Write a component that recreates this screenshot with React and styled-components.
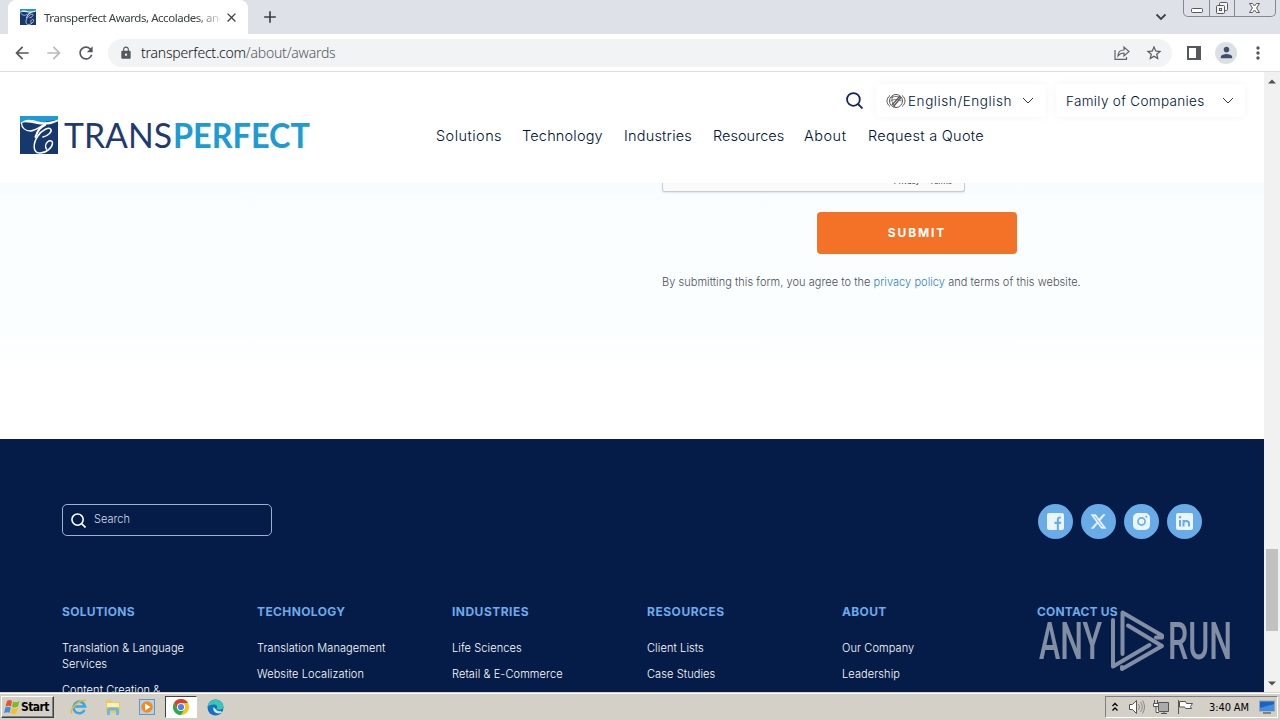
import React from 'react';
import styled, { createGlobalStyle } from 'styled-components';
import {
  MdArrowBack,
  MdArrowForward,
  MdRefresh,
  MdLock,
  MdStarBorder,
  MdMoreVert,
  MdClose,
  MdAdd,
  MdPerson,
} from 'react-icons/md';
import { FaXTwitter } from 'react-icons/fa6';

const GlobalStyle = createGlobalStyle`
  * {
    box-sizing: border-box;
  }
  body {
    margin: 0;
    overflow: hidden;
    font-family: Inter, 'Liberation Sans', sans-serif;
  }
`;

const Desktop = styled.div`
  width: 1280px;
  height: 720px;
  display: flex;
  flex-direction: column;
  background: #fff;
`;

/* ---------- browser chrome ---------- */

const TabStrip = styled.div`
  display: flex;
  align-items: flex-start;
  height: 34px;
  flex: none;
  padding-left: 8px;
  background: #dee1e8;
`;

const Tab = styled.div`
  display: flex;
  align-items: center;
  width: 240px;
  height: 34px;
  padding: 0 9px 0 12px;
  background: #fff;
  border-radius: 8px 8px 0 0;
  color: #3c4043;
  svg {
    flex: none;
  }
`;

const TabTitle = styled.span`
  width: 176px;
  flex: none;
  margin: 0 4px 0 8px;
  overflow: hidden;
  white-space: nowrap;
  font: 11.5px 'Noto Sans', sans-serif;
  letter-spacing: -0.46px;
  mask-image: linear-gradient(to right, #000 152px, transparent 180px);
`;

const NewTab = styled.div`
  display: flex;
  margin: 7px 0 0 12px;
  color: #3c4043;
`;

const StripEnd = styled.div`
  display: flex;
  margin-left: auto;
`;

const TabSearch = styled.svg`
  margin: 13px 16px 0 0;
`;

const WindowButtons = styled.div`
  display: flex;
  width: 93px;
  height: 17px;
  margin-right: 4px;
  border: 1px solid #85898f;
  border-top: 0;
  border-radius: 0 0 5px 5px;
`;

const WindowButton = styled.div`
  display: flex;
  justify-content: center;
  width: ${(p) => p.$width}px;
  border-right: ${(p) => (p.$last ? '0' : '1px solid #85898f')};
`;

const Toolbar = styled.div`
  display: flex;
  align-items: center;
  height: 38px;
  flex: none;
  padding-left: 12px;
  border-bottom: 1px solid #dcdee1;
  color: #55585c;
  > * {
    flex: none;
  }
`;

const NavIcon = styled.div`
  display: flex;
  width: 32px;
  color: ${(p) => (p.$off ? '#b9bbbe' : '#55585c')};
`;

const AddressBar = styled.div`
  display: flex;
  align-items: center;
  width: 1064px;
  height: 28px;
  padding: 0 9px 0 11px;
  border-radius: 14px;
  background: #f1f3f5;
`;

const Url = styled.span`
  flex: 1;
  margin-left: 8px;
  font: 300 14px 'Noto Sans', sans-serif;
  letter-spacing: -0.22px;
  color: #111317;
  span {
    color: #55595d;
  }
`;

const ShareIcon = styled.svg`
  margin-right: 15px;
`;

const Avatar = styled.div`
  display: flex;
  align-items: center;
  justify-content: center;
  width: 22px;
  height: 22px;
  margin: 0 11px 0 -1px;
  border-radius: 50%;
  background: #dcdfe4;
  color: #44506b;
`;

/* ---------- site ---------- */

const Viewport = styled.div`
  display: flex;
  height: 620px;
  flex: none;
`;

const Page = styled.div`
  display: flex;
  flex-direction: column;
  width: 1264px;
  height: 620px;
  overflow: hidden;
`;

const Header = styled.header`
  display: flex;
  height: 111px;
  flex: none;
  padding-left: 20px;
  background: #fff;
  color: #000f33;
  font-weight: 350;
`;

const Logo = styled.svg`
  width: 296px;
  height: 44px;
  margin-top: 41px;
`;

const HeaderMain = styled.div`
  display: flex;
  flex-direction: column;
  width: 828px;
  margin-left: 120px;
`;

const Controls = styled.div`
  display: flex;
  align-items: center;
  justify-content: flex-end;
  height: 33px;
  margin-top: 12px;
  padding-right: 19px;
`;

const Select = styled.div`
  display: flex;
  align-items: center;
  width: ${(p) => p.$width}px;
  height: 33px;
  margin-left: ${(p) => p.$gap}px;
  padding: 0 ${(p) => p.$pad}px 0 10px;
  border-radius: 4px;
  background: #fff;
  box-shadow: 0 0 10px rgba(0, 0, 0, 0.045);
  font-size: 13.5px;
  letter-spacing: ${(p) => p.$spacing}px;
  white-space: nowrap;
  svg:last-child {
    margin-left: auto;
  }
`;

const SiteNav = styled.nav`
  display: grid;
  grid-template-columns: 86px 102px 89px 91px 64px auto;
  margin-top: 10px;
  font-size: 14.5px;
  line-height: 18px;
  white-space: nowrap;
`;

const NavLink = styled.a`
  letter-spacing: ${(p) => p.$spacing}px;
`;

const FormArea = styled.section`
  display: flex;
  flex-direction: column;
  align-items: flex-start;
  height: 256px;
  flex: none;
  padding-left: 662px;
  background: linear-gradient(#f8fcff 0, #fafeff 40px, #fbfeff 150px, #fff 195px);
`;

const Captcha = styled.div`
  display: flex;
  align-items: flex-end;
  justify-content: flex-end;
  gap: 10px;
  width: 303px;
  height: 9px;
  padding: 0 12px 4px 0;
  overflow: hidden;
  border: 1px solid #c9cccf;
  border-top: 0;
  border-radius: 0 0 3px 3px;
  box-shadow: 0 1px 2px rgba(0, 0, 0, 0.1);
  background: #fafafa;
  font: 8px/10px Roboto, sans-serif;
  color: #333;
`;

const Submit = styled.button`
  width: 200px;
  height: 42px;
  margin: 20px 0 0 155px;
  padding: 0 0 2px;
  border: 0;
  border-radius: 4px;
  background: #f47227;
  color: #fff;
  font: 700 12px Inter, sans-serif;
  letter-spacing: 1.9px;
`;

const Notice = styled.p`
  margin: 21px 0 0;
  font-size: 11px;
  font-weight: 300;
  line-height: 15px;
  letter-spacing: 0.045px;
  white-space: nowrap;
  color: #4c5056;
  a {
    color: #2f7fd2;
  }
`;

const Footer = styled.footer`
  display: flex;
  flex-direction: column;
  height: 253px;
  flex: none;
  padding: 65px 62px 0;
  background: #051c48;
  color: #fff;
`;

const FooterTop = styled.div`
  display: flex;
  justify-content: space-between;
  height: 35px;
`;

const SearchBox = styled.div`
  display: flex;
  align-items: center;
  gap: 8px;
  width: 210px;
  height: 32px;
  padding-left: 8px;
  border: 1px solid #9fb0cf;
  border-radius: 5px;
  font-size: 11px;
  font-weight: 300;
  color: #d3dbea;
  span {
    margin-top: -2px;
  }
`;

const Socials = styled.div`
  display: flex;
  gap: 8px;
`;

const Social = styled.a`
  display: flex;
  align-items: center;
  justify-content: center;
  width: 35px;
  height: 35px;
  border-radius: 50%;
  background: #69abe6;
  color: #e9f5ff;
`;

const Columns = styled.div`
  display: grid;
  grid-template-columns: repeat(6, 195px);
  margin-top: 64px;
`;

const Column = styled.div`
  display: flex;
  flex-direction: column;
  align-items: flex-start;
`;

const ColumnTitle = styled.h4`
  margin: 0 0 20px;
  font-size: 12px;
  font-weight: 650;
  line-height: 17px;
  letter-spacing: ${(p) => p.$spacing}px;
  color: #6cabe8;
`;

const ColumnLink = styled.a`
  margin-bottom: 10px;
  font-size: 11px;
  font-weight: 350;
  line-height: 16px;
  letter-spacing: 0.1px;
  white-space: pre-line;
`;

const Scrollbar = styled.div`
  display: flex;
  flex-direction: column;
  align-items: center;
  width: 16px;
  height: 620px;
  padding: 7px 0 6px;
  background: #f1f1f1;
`;

const Thumb = styled.div`
  width: 12px;
  height: 82px;
  margin: auto 0 50px;
  background: #c1c1c1;
`;

const Watermark = styled.svg`
  position: absolute;
  left: 1036px;
  top: 606px;
  opacity: 0.5;
`;

/* ---------- taskbar ---------- */

const Taskbar = styled.div`
  display: flex;
  align-items: center;
  height: 28px;
  flex: none;
  padding: 1px 2px 0 1px;
  border-top: 1px solid #d6d2ca;
  box-shadow: inset 0 1px #fff;
  background: #d4d0c8;
`;

const Start = styled.div`
  display: flex;
  align-items: center;
  gap: 0;
  width: 53px;
  height: 22px;
  padding-left: 2px;
  border: 1px solid;
  border-color: #fff #404040 #404040 #fff;
  box-shadow: inset -1px -1px #808080;
  font: 700 12px 'DejaVu Sans Condensed', 'DejaVu Sans', sans-serif;
  font-stretch: condensed;
  letter-spacing: -0.6px;
  color: #000;
`;

const Launchers = styled.div`
  display: flex;
  align-items: center;
  margin-left: 8px;
`;

const Launcher = styled.div`
  display: flex;
  align-items: center;
  justify-content: center;
  width: 34px;
  height: 22px;
  ${(p) =>
    p.$active &&
    `
    width: 32px;
    margin: 0 1px;
    background: #fff;
    border: 1px solid;
    border-color: #404040 #fff #fff #404040;
  `}
`;

const Tray = styled.div`
  display: flex;
  align-items: center;
  width: 173px;
  height: 22px;
  margin-left: auto;
  padding-left: 6px;
  border: 1px solid;
  border-color: #808080 #fff #fff #808080;
  font: 11px 'DejaVu Sans Condensed', 'DejaVu Sans', sans-serif;
  font-stretch: condensed;
  color: #000;
  span {
    width: 51px;
    padding-left: 1px;
    letter-spacing: -0.1px;
    white-space: nowrap;
  }
`;

const Brand = () => (
  <>
    <rect width="38" height="38" fill="#17386f" />
    <path d="M0 0h38v5C30 3 24 8 14 6 7 5 3 6 0 8z" fill="#1c9bd7" />
    <path d="M1 7C6 2 12 4 18 5.500S31 6 38 3.500v1.800C31 9 24 9.500 17 8 10 6.500 5 5.500 1 7z" fill="#fff" />
    <g fill="none" stroke="#fff" strokeLinecap="round">
      <path d="M1.500 7c0 5 4 8 9 8 6-.2 9-5 15-6.300" strokeWidth="1.300" />
      <path d="M25 9c-5 2-8 7-9.500 12" strokeWidth="2" />
      <path
        d="M23 21c5-1 9-5 8-7.500-1.500-3-9 0-13.500 7-4.500 7-5 16 2 16.500 7 .4 13-6 13-10 0-2.500-3-3-5-1s-2.500 5-1 7"
        strokeWidth="1.500"
      />
    </g>
  </>
);

const Chevron = () => (
  <svg width="12" height="7" viewBox="0 0 12 7" fill="none" stroke="#26344f">
    <path d="M1 1l5 5 5-5" />
  </svg>
);

const Magnifier = ({ size, color }) => (
  <svg width={size} height={size} viewBox="0 0 16 16" fill="none" stroke={color} strokeWidth="1.7">
    <circle cx="7" cy="7" r="6" />
    <path d="M11.3 11.3l4.2 4.2" />
  </svg>
);

const nav = [
  ['Solutions', 0.45],
  ['Technology', 0.18],
  ['Industries', 0.2],
  ['Resources', 0.03],
  ['About', 0.5],
  ['Request a Quote', 0.28],
];

const columns = [
  ['Solutions', 0.28, ['Translation & Language\nServices', 'Content Creation &']],
  ['Technology', 0.38, ['Translation Management', 'Website Localization']],
  ['Industries', 0.48, ['Life Sciences', 'Retail & E-Commerce']],
  ['Resources', 0.53, ['Client Lists', 'Case Studies']],
  ['About', 0.35, ['Our Company', 'Leadership']],
  ['Contact Us', 0.18, []],
];

function BrowserChrome() {
  return (
    <>
      <TabStrip>
        <Tab>
          <svg width="16" height="16" viewBox="0 0 38 38">
            <Brand />
          </svg>
          <TabTitle>Transperfect Awards, Accolades, and</TabTitle>
          <MdClose size={15} />
        </Tab>
        <NewTab>
          <MdAdd size={20} />
        </NewTab>
        <StripEnd>
          <TabSearch width="12" height="8" viewBox="0 0 12 8" fill="none" stroke="#3c4043" strokeWidth="1.8">
            <path d="M1.500 1.500L6 6l4.500-4.500" />
          </TabSearch>
          <WindowButtons>
            <WindowButton $width={26}>
              <svg width="14" height="16" fill="#fff" stroke="#55585d">
                <rect x="1.500" y="8.500" width="11" height="4" rx="1" />
              </svg>
            </WindowButton>
            <WindowButton $width={25}>
              <svg width="14" height="16" fill="#f3f4f6" stroke="#55585d">
                <rect x="4.500" y="2.500" width="8" height="8" rx="1" />
                <rect x="1.500" y="5.500" width="8" height="8" rx="1" />
                <rect x="4.500" y="8.500" width="2" height="2" />
              </svg>
            </WindowButton>
            <WindowButton $width={40} $last>
              <svg width="14" height="16" fill="#fff" stroke="#55585d">
                <path d="M1.500 3.500h3l2 2.500 2-2.500h3l-3 4.500 3 4.500h-3l-2-2.500-2 2.500h-3l3-4.500z" />
              </svg>
            </WindowButton>
          </WindowButtons>
        </StripEnd>
      </TabStrip>
      <Toolbar>
        <NavIcon><MdArrowBack size={20} /></NavIcon>
        <NavIcon $off><MdArrowForward size={20} /></NavIcon>
        <NavIcon><MdRefresh size={20} /></NavIcon>
        <AddressBar>
          <MdLock size={14} />
          <Url>transperfect.com<span>/about/awards</span></Url>
          <ShareIcon width="16" height="16" viewBox="0 0 16 16" fill="none" stroke="#606468" strokeWidth="1.200">
            <path d="M1 5v9.400h11.500V12" />
            <path d="M4 11c0-4 2.500-6 6-6V2l5 4.500-5 4.500V8c-3 0-4.500.8-6 3z" />
          </ShareIcon>
          <MdStarBorder size={18} />
        </AddressBar>
        <svg width="44" height="14" viewBox="0 0 44 14">
          <path d="M16 1h12v12H16z" fill="none" stroke="#55585c" strokeWidth="2" />
          <path d="M24 1h5v12h-5z" fill="#55585c" />
        </svg>
        <Avatar><MdPerson size={17} /></Avatar>
        <MdMoreVert size={20} />
      </Toolbar>
    </>
  );
}

function SiteHeader() {
  return (
    <Header>
      <Logo viewBox="0 0 296 44">
        <g transform="translate(0 3)">
          <Brand />
        </g>
        <g fontFamily="Lato, sans-serif" fontSize="34">
          <text x="44" y="35" fill="#1f3a70" fontWeight="400" textLength="108" lengthAdjust="spacingAndGlyphs">TRANS</text>
          <text x="153" y="35" fill="#1c9bd7" fontWeight="700" textLength="137" lengthAdjust="spacingAndGlyphs">PERFECT</text>
        </g>
      </Logo>
      <HeaderMain>
        <Controls>
          <Magnifier size={17} color="#14284f" />
          <Select $width={170} $gap={13} $pad={12} $spacing={0.58}>
            <svg width="22" height="16" viewBox="0 0 22 16" fill="none" stroke="#555">
              <circle cx="10" cy="8" r="6.500" />
              <path d="M4 2.500c-4 3-4 8 0 11M16 2.500c4 3 4 8 0 11" />
              <path d="M5 5c3-2 7-2 10 0M4.500 8c3-2 7-2 11 0M7 3c-2 4-1 7 2 11" strokeWidth=".8" />
              <path d="M14 3L6 12M15 4.500L7.500 13.500" strokeWidth="1.200" />
            </svg>
            <span>English/English</span>
            <Chevron />
          </Select>
          <Select $width={189} $gap={10} $pad={11} $spacing={0.34}>
            <span>Family of Companies</span>
            <Chevron />
          </Select>
        </Controls>
        <SiteNav>
          {nav.map(([label, spacing]) => (
            <NavLink key={label} $spacing={spacing}>{label}</NavLink>
          ))}
        </SiteNav>
      </HeaderMain>
    </Header>
  );
}

function SiteFooter() {
  return (
    <Footer>
      <FooterTop>
        <SearchBox>
          <Magnifier size={15} color="#fff" />
          <span>Search</span>
        </SearchBox>
        <Socials>
          <Social>
            <svg width="17" height="17" viewBox="0 0 17 17">
              <rect width="17" height="17" rx="2" fill="#e9f5ff" />
              <path d="M9.800 17v-6H7.500V8.700h2.300V7c0-2.600 1.500-3.700 4-3.400v2c-1.400-.1-1.900.2-1.900 1.500v1.600h2.200L13.800 11h-1.900v6z" fill="#69abe6" />
            </svg>
          </Social>
          <Social><FaXTwitter size={17} stroke="#e9f5ff" strokeWidth="14" /></Social>
          <Social>
            <svg width="17" height="17" viewBox="0 0 17 17">
              <rect width="17" height="17" rx="5" fill="#e9f5ff" />
              <circle cx="8.500" cy="8.500" r="3.600" fill="none" stroke="#69abe6" strokeWidth="1.600" />
              <circle cx="13.300" cy="3.800" r="1" fill="#69abe6" />
            </svg>
          </Social>
          <Social>
            <svg width="17" height="17" viewBox="0 0 17 17">
              <rect width="17" height="17" rx="2" fill="#e9f5ff" />
              <path d="M4 7v6.500M7.500 13.500V7M7.500 10c0-2.500 5.500-3 5.500.5v3" fill="none" stroke="#69abe6" strokeWidth="2" />
              <circle cx="4" cy="4.200" r="1.200" fill="#69abe6" />
            </svg>
          </Social>
        </Socials>
      </FooterTop>
      <Columns>
        {columns.map(([title, spacing, links]) => (
          <Column key={title}>
            <ColumnTitle $spacing={spacing}>{title.toUpperCase()}</ColumnTitle>
            {links.map((link) => (
              <ColumnLink key={link}>{link}</ColumnLink>
            ))}
          </Column>
        ))}
      </Columns>
    </Footer>
  );
}

function WindowsBar() {
  return (
    <Taskbar>
      <Start>
        <svg width="17" height="16" viewBox="0 0 17 16">
          <path d="M3 2c2-1.500 3.500-1 5 0L7 7.500C5.500 6.500 4 6.500 1.500 7.500z" fill="#e8552b" />
          <path d="M9 2.500c2 1 4 1 6.500-.5l-1.500 5.500c-2 1.200-4.200 1.200-6 .3z" fill="#7db928" />
          <path d="M1.300 8.500c2-1 3.800-1 5.500 0L5.500 14c-1.500-1-3-1-5.500 0z" fill="#3f8fe0" />
          <path d="M8 9c2 1 3.800 1 5.900-.2L12.500 14c-2 1.300-4 1.300-5.800.3z" fill="#fbbf1b" />
        </svg>
        Start
      </Start>
      <Launchers>
        <Launcher>
          <svg width="18" height="18" viewBox="0 0 18 18" fill="none">
            <path d="M14.500 12A5.800 5.800 0 1 1 15 8.500H5" stroke="#3ba7e5" strokeWidth="2.600" />
            <path d="M2 15.500C-1 12 9 1 16 2.500" stroke="#eab730" strokeWidth="1.500" />
          </svg>
        </Launcher>
        <Launcher>
          <svg width="18" height="18" viewBox="0 0 18 18">
            <path d="M2 2h5l1 2h8v11H2z" fill="#e9c962" />
            <path d="M3 5h12v4H3z" fill="#fbf0b8" />
            <path d="M3 17v-5q0-2.500 2.500-2.500h7q2.500 0 2.500 2.500v5h-3v-4.500H6V17z" fill="#6db8e0" />
          </svg>
        </Launcher>
        <Launcher>
          <svg width="16" height="16" viewBox="0 0 16 16">
            <rect x=".5" y=".5" width="15" height="15" fill="#b5d3ee" stroke="#6b94bd" />
            <circle cx="8" cy="8" r="5.800" fill="#f28a1c" />
            <path d="M6 4.500v7L11.500 8z" fill="#fff" />
          </svg>
        </Launcher>
        <Launcher $active>
          <svg width="16" height="16" viewBox="0 0 16 16">
            <circle cx="8" cy="8" r="8" fill="#fbc116" />
            <path d="M1.070 4A8 8 0 0 1 14.930 4H8L4.500 10z" fill="#e33b2e" />
            <path d="M1.070 4A8 8 0 0 0 8 16l3.500-6L8 11.500 4.500 10z" fill="#2da94f" />
            <circle cx="8" cy="8" r="4" fill="#fff" />
            <circle cx="8" cy="8" r="3.100" fill="#4285f4" />
          </svg>
        </Launcher>
        <Launcher>
          <svg width="17" height="17" viewBox="0 0 17 17">
            <circle cx="8.500" cy="8.500" r="8" fill="#1372c4" />
            <path d="M.6 8C1.500-2 16-1 16.500 7c0 4-5 4.500-7 3 1.500-2 .5-4.500-2-4.500C4 5.500 1 6.500.6 8z" fill="#3cc5b4" />
            <path d="M6.500 8c-1.500 5 4 8 8.500 5.500l-1-1.500c-2 .6-4 0-5-1.500z" fill="#d4e6ef" />
          </svg>
        </Launcher>
      </Launchers>
      <Tray>
        <svg width="6" height="10" viewBox="0 0 6 10" fill="none" stroke="#000" strokeWidth="1.300">
          <path d="M.5 4L3 1.500 5.500 4M.5 8.500L3 6l2.500 2.500" />
        </svg>
        <svg width="90" height="18" viewBox="0 0 90 18" fill="none" stroke="#555">
          <path d="M11.500 6.500h3l4-4v13l-4-4h-3z" fill="#fff" />
          <path d="M20.500 6q2 3 0 6M22.500 4q3.500 5 0 10M24.500 2.500q4 6.500 0 13" stroke="#888" />
          <path d="M40.500 4.500h10v9h-10z" fill="#aaa" />
          <path d="M43 15.500h6M46 13.500v2" />
          <path d="M36.500 2v3M39.500 2v3M35.500 5.500h5v3h-5zM38 8.500v6h3" fill="#fff" />
          <path d="M60.500 2v14" />
          <path d="M61.500 3.500h6l1 2h6l-2 3 1 2h-6l-1-1.500h-5z" fill="#fff" />
        </svg>
        <span>3:40 AM</span>
        <svg width="16" height="14" viewBox="0 0 16 14">
          <rect x=".5" y="1" width="15" height="10" fill="#1c62c4" stroke="#92a5bb" />
          <path d="M1 8l14-4v6H1z" fill="#418ee3" />
          <path d="M4 13h8" stroke="#333" />
        </svg>
      </Tray>
    </Taskbar>
  );
}

export default function App() {
  return (
    <Desktop>
      <GlobalStyle />
      <BrowserChrome />
      <Viewport>
        <Page>
          <SiteHeader />
          <FormArea>
            <Captcha>
              <span>Privacy</span>
              <span>Terms</span>
            </Captcha>
            <Submit>SUBMIT</Submit>
            <Notice>
              By submitting this form, you agree to the <a>privacy policy</a> and terms of this website.
            </Notice>
          </FormArea>
          <SiteFooter />
        </Page>
        <Scrollbar>
          <svg width="8" height="5"><path d="M0 4.500L4 .5l4 4z" fill="#505050" /></svg>
          <Thumb />
          <svg width="8" height="5"><path d="M0 .5l4 4 4-4z" fill="#505050" /></svg>
        </Scrollbar>
      </Viewport>
      <WindowsBar />
      <Watermark width="200" height="70" viewBox="0 0 200 70" fill="#fff">
        <g fontFamily="Roboto, sans-serif" fontSize="52" fontWeight="500">
          <text x="3" y="53" textLength="63" lengthAdjust="spacingAndGlyphs">ANY</text>
          <text x="132" y="53" textLength="64" lengthAdjust="spacingAndGlyphs">RUN</text>
        </g>
        <g fill="none" stroke="#fff" strokeWidth="4" strokeLinejoin="round" strokeLinecap="round">
          <path d="M77 14v46.500L113.500 39" />
          <path d="M86.500 48V6.500L126 29.500v2h-6" />
          <path d="M92 19.500l34 20.500-40 23v-2" />
        </g>
      </Watermark>
    </Desktop>
  );
}
